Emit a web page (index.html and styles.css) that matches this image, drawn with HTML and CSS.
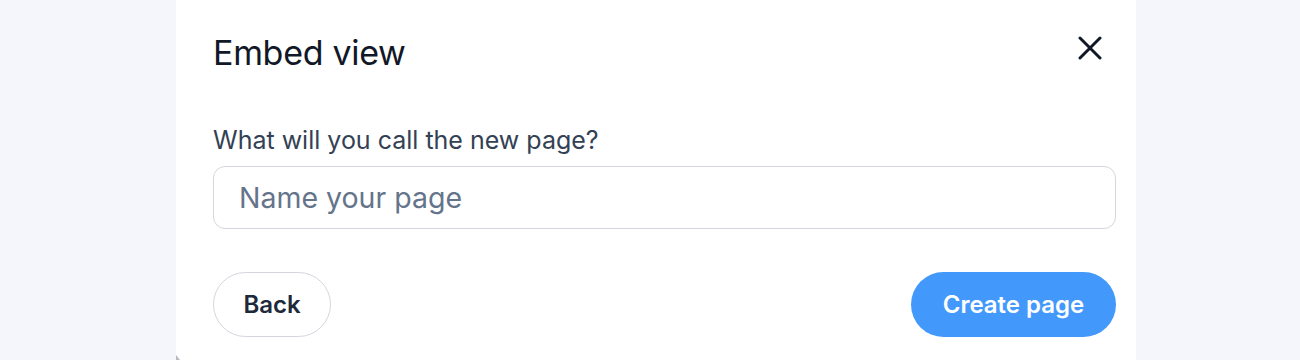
FILE: index.html
```html
<!DOCTYPE html>
<html lang="en">
  <head>
    <meta charset="UTF-8" />
    <meta name="viewport" content="width=device-width, initial-scale=1.0" />
    <title>Embed view</title>
    <link rel="stylesheet" href="styles.css">
  </head>
  <body>
    <div class="modal">
      <div class="modal-header">
        <h2 class="modal-title">Embed view</h2>
        <button class="close-btn" aria-label="Close">
          <svg width="24" height="24" viewBox="0 0 24 24" fill="none" stroke="#111827" stroke-width="3" stroke-linecap="round">
            <path d="M2 2 L22 22 M22 2 L2 22" />
          </svg>
        </button>
      </div>
      <form class="modal-body">
        <label for="page-name" class="field-label">What will you call the new page?</label>
        <input id="page-name" type="text" class="field-input" placeholder="Name your page" />
        <div class="actions">
          <button type="button" class="btn btn-outline">Back</button>
          <button type="submit" class="btn btn-primary">Create page</button>
        </div>
      </form>
    </div>
  </body>
</html>
```

FILE: styles.css
```css
:root {
  --primary: #4399fb;
  --bg: #f5f6fb;
  --border: #d4d6dd;
}

body {
  margin: 0;
  background-color: var(--bg);
  font-family: Inter, "Noto Sans", sans-serif;
  height: 360px;
  overflow: hidden;
}

.modal {
  position: relative;
  width: 960px;
  margin-left: 176px;
  height: 360px;
  box-sizing: border-box;
  background-color: #fff;
  padding: 28px 20px 0 37px;
}
.modal::after {
  content: "";
  position: absolute;
  left: 0;
  bottom: 0;
  width: 0;
  height: 0;
  border-left: 4px solid #b8bac2;
  border-top: 5px solid transparent;
}

.modal-header {
  display: flex;
  align-items: center;
  justify-content: space-between;
  height: 48px;
}
.modal-title {
  margin: 0;
  font-size: 34px;
  font-weight: 400;
  color: #111827;
  letter-spacing: -0.3px;
}
.close-btn {
  align-self: flex-start;
  border: 0;
  background: none;
  padding: 0;
  margin-top: 8px;
  margin-right: 14px;
  width: 24px;
  height: 24px;
  cursor: pointer;
}

.modal-body {
  margin-top: 48px;
  width: 903px;
}
.field-label {
  display: block;
  font-size: 25px;
  color: #334155;
  line-height: 32px;
  margin-bottom: 10px;
}
.field-input {
  display: block;
  width: 100%;
  box-sizing: border-box;
  height: 63px;
  border: 1px solid var(--border);
  border-radius: 12px;
  padding: 0 25px;
  font-family: inherit;
  font-size: 28.5px;
  color: #111827;
  outline: none;
}
.field-input::placeholder {
  color: #64748b;
}

.actions {
  display: flex;
  justify-content: space-between;
  margin-top: 43px;
}
.btn {
  height: 65px;
  border-radius: 999px;
  font-family: inherit;
  font-size: 24px;
  font-weight: 600;
  cursor: pointer;
}
.btn-outline {
  width: 118px;
  background: #fff;
  border: 1px solid var(--border);
  color: #1e293b;
}
.btn-primary {
  width: 205px;
  background-color: var(--primary);
  border: 0;
  color: #fff;
}
```
